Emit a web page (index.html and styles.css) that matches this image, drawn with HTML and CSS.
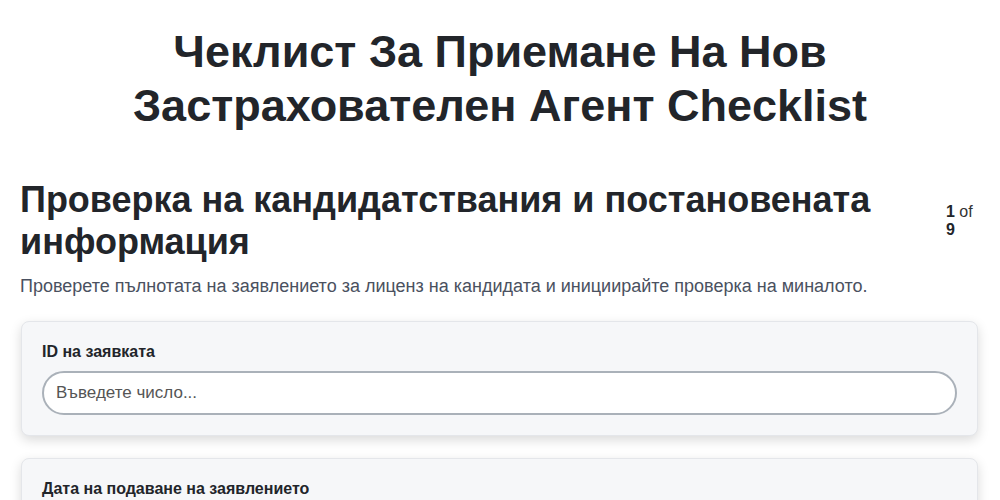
FILE: index.html
```html
<!DOCTYPE html>
<html lang="bg">
<head>
<meta charset="utf-8">
<link rel="stylesheet" href="styles.css">
</head>
<body>
<div class="page">
  <h1 class="title">Чеклист За Приемане На Нов Застрахователен Агент Checklist</h1>
  <div class="step-head">
    <h2 class="step-title">Проверка на кандидатствания и постановената информация</h2>
    <div class="counter"><b>1</b> of <b>9</b></div>
  </div>
  <p class="step-desc">Проверете пълнотата на заявлението за лиценз на кандидата и инициирайте проверка на миналото.</p>
  <div class="card">
    <label class="field-label">ID на заявката</label>
    <input class="field-input" type="text" placeholder="Въведете число...">
  </div>
  <div class="card">
    <label class="field-label">Дата на подаване на заявлението</label>
    <input class="field-input" type="text" placeholder="">
  </div>
</div>
</body>
</html>
```
FILE: styles.css
```css
* { box-sizing: border-box; }
body {
  margin: 0;
  background: #ffffff;
  font-family: "Liberation Sans", Arial, sans-serif;
  color: #1f2328;
}
.page {
  padding: 20px;
}
.title {
  text-align: center;
  font-size: 45px;
  line-height: 54px;
  font-weight: 700;
  margin: 5px 100px 46px;
  color: #22252a;
}
.step-head {
  display: flex;
  align-items: center;
  gap: 40px;
}
.step-title {
  flex: 1;
  margin: 0;
  font-size: 36px;
  line-height: 42px;
  font-weight: 700;
  color: #22252a;
}
.counter {
  width: 34px;
  font-size: 16px;
  line-height: 18px;
  color: #333;
}
.counter b { color: #22252a; }
.step-desc {
  margin: 12px 0 24px;
  font-size: 18px;
  line-height: 22px;
  color: #4a5160;
}
.card {
  background: #f6f7f9;
  border: 1px solid #e4e6ea;
  border-radius: 8px;
  box-shadow: 0 4px 12px rgba(0,0,0,0.15);
  padding: 20px;
  margin: 0 2px 22px 1px;
}
.field-label {
  display: block;
  font-size: 16px;
  font-weight: 700;
  line-height: 20px;
  margin-bottom: 9px;
  color: #22252a;
}
.field-input {
  display: block;
  width: 100%;
  height: 44px;
  border: 2px solid #aab1b9;
  border-radius: 22px;
  background: #fff;
  padding: 0 12px;
  font-family: "Liberation Sans", Arial, sans-serif;
  font-size: 17px;
  color: #333;
  outline: none;
}
.field-input::placeholder { color: #555; }
```
